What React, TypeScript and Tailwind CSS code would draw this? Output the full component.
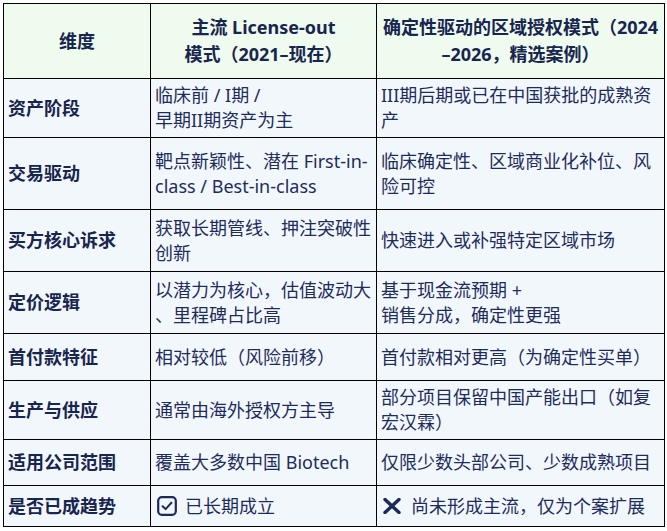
import type { ReactNode } from "react";

type Row = {
  label: string;
  left: ReactNode;
  right: ReactNode;
};

const CheckBoxIcon = () => (
  <svg width="20" height="20" viewBox="0 0 20 20" fill="none" className="shrink-0">
    <rect x="1.2" y="1.2" width="17.6" height="17.6" rx="3.6" stroke="#1b2a57" strokeWidth="2.2" />
    <path d="M5.6 10.2 L8.6 13.1 L14.4 6.8" stroke="#1b2a57" strokeWidth="2" strokeLinecap="round" strokeLinejoin="round" />
  </svg>
);

const CrossIcon = () => (
  <svg width="18" height="16" viewBox="0 0 18 16" fill="none" className="shrink-0">
    <path d="M2 1.5 L16 14.5 M16 1.5 L2 14.5" stroke="#1b2a57" strokeWidth="3.4" strokeLinecap="round" />
  </svg>
);

const rows: Row[] = [
  {
    label: "资产阶段",
    left: (
      <>
        临床前 / I期 /<br />
        早期II期资产为主
      </>
    ),
    right: (
      <>
        III期后期或已在中国获批的成熟资<br />产
      </>
    ),
  },
  {
    label: "交易驱动",
    left: (
      <>
        靶点新颖性、潜在 First-in-<br />
        class / Best-in-class
      </>
    ),
    right: (
      <>
        临床确定性、区域商业化补位、风<br />
        险可控
      </>
    ),
  },
  {
    label: "买方核心诉求",
    left: (
      <>
        获取长期管线、押注突破性<br />
        创新
      </>
    ),
    right: "快速进入或补强特定区域市场",
  },
  {
    label: "定价逻辑",
    left: (
      <>
        以潜力为核心，估值波动大<br />
        、里程碑占比高
      </>
    ),
    right: (
      <>
        基于现金流预期 +<br />
        销售分成，确定性更强
      </>
    ),
  },
  {
    label: "首付款特征",
    left: "相对较低（风险前移）",
    right: "首付款相对更高（为确定性买单）",
  },
  {
    label: "生产与供应",
    left: "通常由海外授权方主导",
    right: (
      <>
        部分项目保留中国产能出口（如复<br />
        宏汉霖）
      </>
    ),
  },
  {
    label: "适用公司范围",
    left: "覆盖大多数中国 Biotech",
    right: "仅限少数头部公司、少数成熟项目",
  },
  {
    label: "是否已成趋势",
    left: (
      <span className="flex items-center gap-[8px] pl-[2px]">
        <CheckBoxIcon />
        已长期成立
      </span>
    ),
    right: (
      <span className="flex items-center gap-[10px] pl-[2px]">
        <CrossIcon />
        尚未形成主流，仅为个案扩展
      </span>
    ),
  },
];

export default function App() {
  const headCell =
    "bg-[#f0fbef] flex items-center justify-center text-center font-bold leading-[27px] text-[#17254f]";
  const labelCell =
    "bg-[#f2f7fc] flex items-center pl-1 font-bold text-[#17254f] whitespace-nowrap";
  const bodyCell =
    "bg-[#f2f7fc] flex items-center pl-1 leading-[25px] text-[#1e2c5c] whitespace-nowrap";

  return (
    <div className="w-[667px] h-[531px] bg-white pt-[3px] pl-[3px] font-['Noto_Sans','Noto_Sans_CJK_SC',sans-serif] text-[18px]">
      <div className="w-[662px] bg-black p-px grid gap-px grid-cols-[146px_225px_287px] grid-rows-[74px_58px_71px_61px_61px_46px_58px_45px_40px]">
        <div className={headCell}>维度</div>
        <div className={headCell}>
          主流 License-out
          <br />
          模式（2021–现在）
        </div>
        <div className={headCell}>
          确定性驱动的区域授权模式（2024
          <br />
          –2026，精选案例）
        </div>

        {rows.map((row) => (
          <div key={row.label} className="contents">
            <div className={labelCell}>{row.label}</div>
            <div className={bodyCell}>
              <div>{row.left}</div>
            </div>
            <div className={bodyCell}>
              <div>{row.right}</div>
            </div>
          </div>
        ))}
      </div>
    </div>
  );
}
